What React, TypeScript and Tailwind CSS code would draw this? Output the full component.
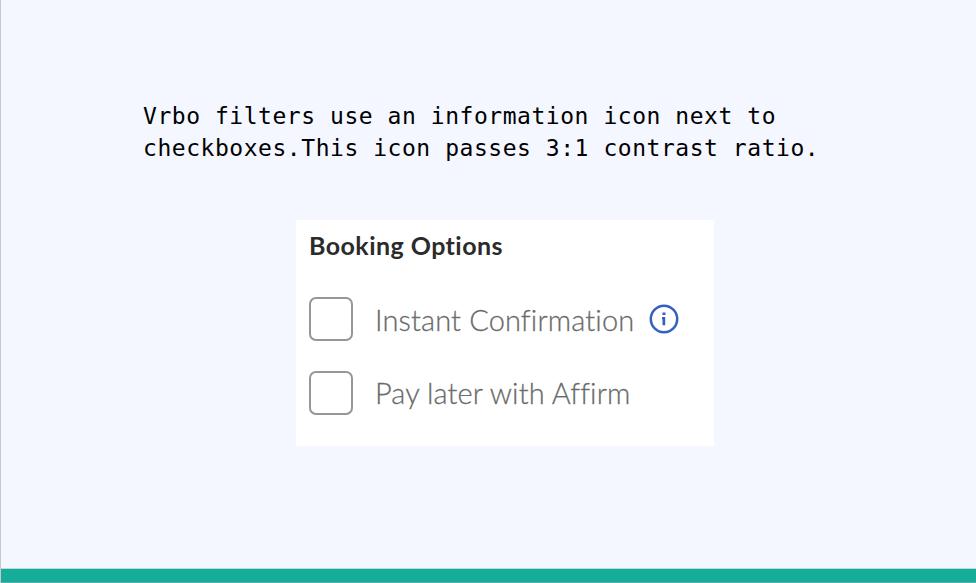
export default function App() {
  return (
    <main className="flex h-[583px] w-[976px] flex-col overflow-hidden border-l border-[#c8c9cc] bg-[#f4f7ff]">
      <div className="flex-1 pt-[100px]">
        <p className="ml-[142px] whitespace-nowrap font-['DejaVu_Sans_Mono',monospace] text-[23px] leading-8 tracking-[0.54px] text-black">
          <span className="block">Vrbo filters use an information icon next to</span>
          <span className="block">checkboxes.This icon passes 3:1 contrast ratio.</span>
        </p>
        <section className="ml-[295px] mt-14 h-[226px] w-[418px] bg-white pl-[13px] pt-[9px] font-[Lato,sans-serif] [font-variant-ligatures:none]">
          <h1 className="h-8 whitespace-nowrap text-[25px] font-bold leading-8 tracking-[0.45px] text-[#2b2b2c]">Booking Options</h1>
          <div className="mt-9 flex h-11 items-center">
            <span className="size-11 rounded-[7px] border-2 border-[#969696]" />
            <span className="ml-[22px] w-[274px] whitespace-nowrap pt-0.5 text-[29px] font-light tracking-[0.13px] text-[#666666] [-webkit-text-stroke:0.3px_#777777]">Instant Confirmation</span>
            <svg className="size-[30px]" viewBox="0 0 30 30" fill="none">
              <circle cx="15" cy="15" r="13.2" stroke="#3461c1" strokeWidth="2.5" />
              <path d="M13.5 8.5h3v2.6h-3zM13 13.1h3.2v8.1h-2.7v-6H13z" fill="#3461c1" />
            </svg>
          </div>
          <div className="mt-[30px] flex h-11 items-center">
            <span className="size-11 rounded-[7px] border-2 border-[#969696]" />
            <span className="ml-[22px] whitespace-nowrap text-[29px] font-light tracking-[0.09px] text-[#666666] [-webkit-text-stroke:0.3px_#777777]">Pay later with Affirm</span>
          </div>
        </section>
      </div>
      <footer className="h-[15px] shrink-0 border-y border-t-[#b6dfe1] border-b-[#4eb4ad] bg-[#15ac9a]" />
    </main>
  );
}
